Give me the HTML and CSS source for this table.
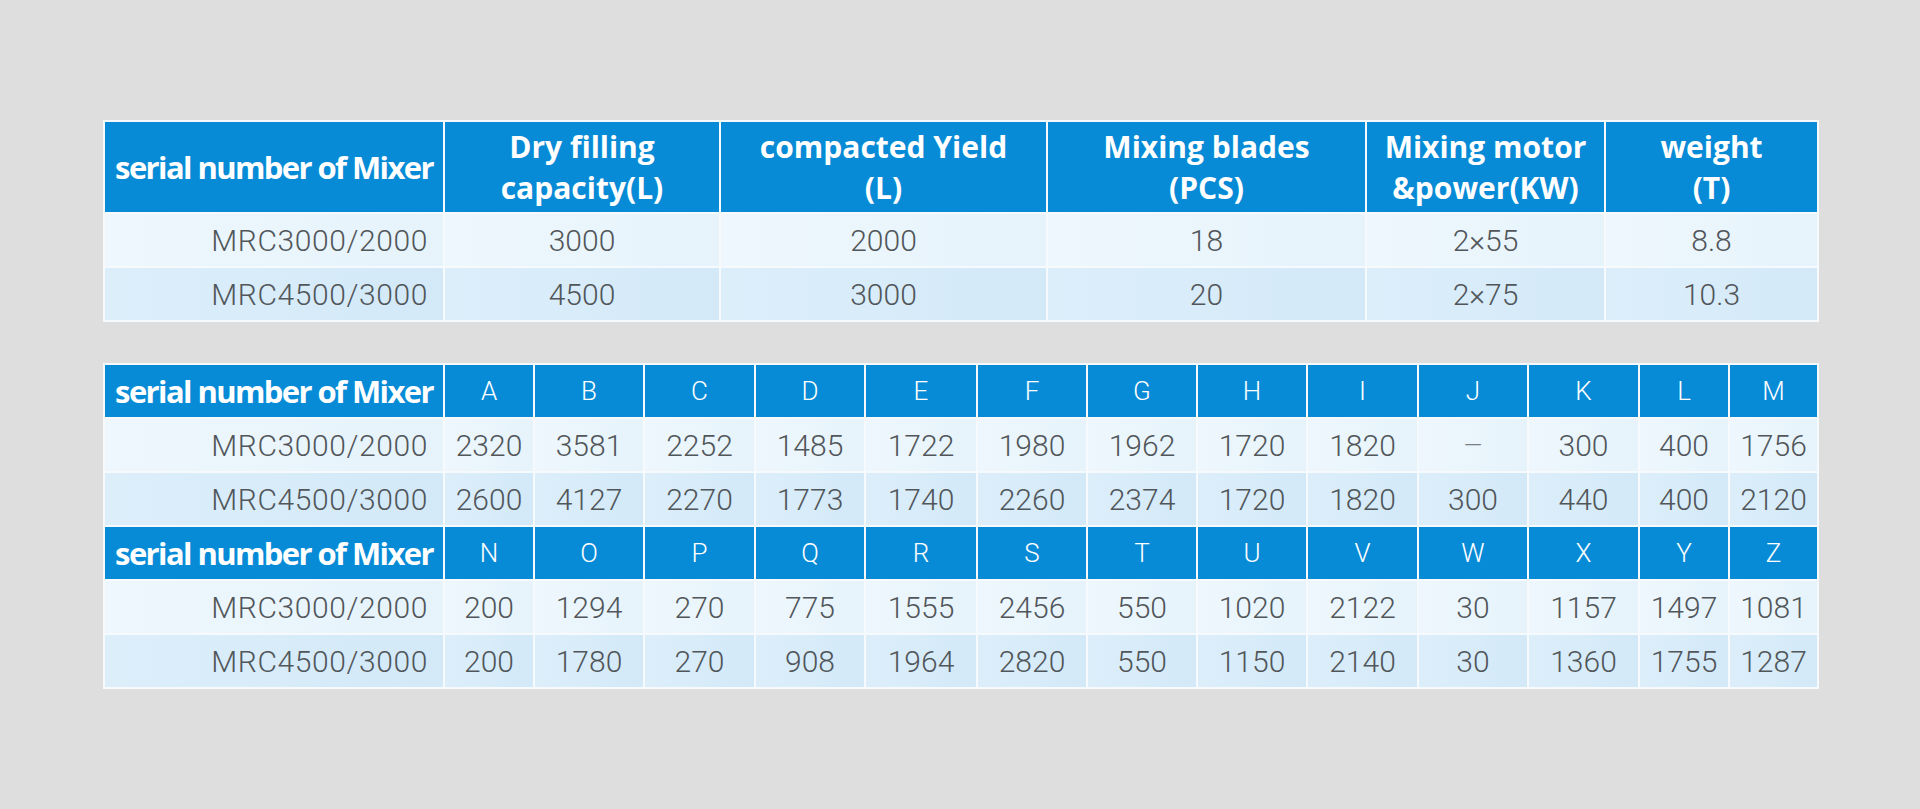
FILE: index.html
```html
<!DOCTYPE html>
<html lang="en">
<head>
<meta charset="utf-8">
<title>Mixer specifications</title>
<link rel="stylesheet" href="styles.css">
</head>
<body>
<main class="page">
  <table class="spec spec-main">
    <colgroup>
      <col class="c-serial"><col style="width:276px"><col style="width:327px"><col style="width:319px"><col style="width:239px"><col style="width:213px">
    </colgroup>
    <thead>
      <tr class="head-tall">
        <th class="serial-head"><span class="cond">serial number of Mixer</span></th>
        <th>Dry filling<br>capacity(L)</th>
        <th>compacted Yield<br>(L)</th>
        <th>Mixing blades<br>(PCS)</th>
        <th>Mixing motor<br>&amp;power(KW)</th>
        <th>weight<br>(T)</th>
      </tr>
    </thead>
    <tbody>
      <tr class="row-a"><td class="model">MRC3000/2000</td><td>3000</td><td>2000</td><td>18</td><td>2×55</td><td>8.8</td></tr>
      <tr class="row-b"><td class="model">MRC4500/3000</td><td>4500</td><td>3000</td><td>20</td><td>2×75</td><td>10.3</td></tr>
    </tbody>
  </table>

  <table class="spec spec-dims">
    <colgroup>
      <col class="c-serial">
      <col style="width:90px"><col style="width:110px"><col style="width:111px"><col style="width:110px"><col style="width:112px"><col style="width:110px"><col style="width:110px"><col style="width:110px"><col style="width:111px"><col style="width:110px"><col style="width:111px"><col style="width:90px"><col style="width:89px">
    </colgroup>
    <tbody>
      <tr class="head-row">
        <th class="serial-head"><span class="cond">serial number of Mixer</span></th>
        <th>A</th><th>B</th><th>C</th><th>D</th><th>E</th><th>F</th><th>G</th><th>H</th><th>I</th><th>J</th><th>K</th><th>L</th><th>M</th>
      </tr>
      <tr class="row-a">
        <td class="model">MRC3000/2000</td>
        <td>2320</td><td>3581</td><td>2252</td><td>1485</td><td>1722</td><td>1980</td><td>1962</td><td>1720</td><td>1820</td><td class="dash">—</td><td>300</td><td>400</td><td>1756</td>
      </tr>
      <tr class="row-b">
        <td class="model">MRC4500/3000</td>
        <td>2600</td><td>4127</td><td>2270</td><td>1773</td><td>1740</td><td>2260</td><td>2374</td><td>1720</td><td>1820</td><td>300</td><td>440</td><td>400</td><td>2120</td>
      </tr>
      <tr class="head-row">
        <th class="serial-head"><span class="cond">serial number of Mixer</span></th>
        <th>N</th><th>O</th><th>P</th><th>Q</th><th>R</th><th>S</th><th>T</th><th>U</th><th>V</th><th>W</th><th>X</th><th>Y</th><th>Z</th>
      </tr>
      <tr class="row-a">
        <td class="model">MRC3000/2000</td>
        <td>200</td><td>1294</td><td>270</td><td>775</td><td>1555</td><td>2456</td><td>550</td><td>1020</td><td>2122</td><td>30</td><td>1157</td><td>1497</td><td>1081</td>
      </tr>
      <tr class="row-b">
        <td class="model">MRC4500/3000</td>
        <td>200</td><td>1780</td><td>270</td><td>908</td><td>1964</td><td>2820</td><td>550</td><td>1150</td><td>2140</td><td>30</td><td>1360</td><td>1755</td><td>1287</td>
      </tr>
    </tbody>
  </table>
</main>
</body>
</html>
```

FILE: styles.css
```css
html, body {
  margin: 0;
  padding: 0;
}

body {
  background: #dedede;
  font-family: "Roboto", "Liberation Sans", sans-serif;
}

.page {
  padding: 120px 0 0 103px;
  display: flex;
  flex-direction: column;
  gap: 41px;
}

.spec {
  width: 1714px;
  table-layout: fixed;
  border-collapse: collapse;
  border: 2px solid #f6fafd;
}

.c-serial {
  width: 340px;
}

.spec th,
.spec td {
  border: 2px solid #f6fafd;
  padding: 0;
  text-align: center;
  vertical-align: middle;
  white-space: nowrap;
  overflow: visible;
}

.spec th {
  background: #088bd6;
  color: #ffffff;
}

.spec-main th {
  font-family: "Open Sans", "Liberation Sans", sans-serif;
  font-weight: 700;
  font-size: 30px;
  line-height: 41px;
  letter-spacing: 0;
}

.head-tall {
  height: 92px;
}

.head-row {
  height: 54px;
}

.spec-dims .head-row th {
  font-family: "Roboto", "Liberation Sans", sans-serif;
  font-weight: 300;
  font-size: 26px;
}

.spec th.serial-head {
  font-family: "Open Sans", "Liberation Sans", sans-serif;
  font-weight: 700;
  font-size: 31px;
  line-height: 43px;
  letter-spacing: -1.6px;
}

.row-a,
.row-b {
  height: 54px;
}

.spec td {
  font-family: "Roboto", "Liberation Sans", sans-serif;
  font-weight: 300;
  font-size: 30px;
  color: #51565a;
}

.row-a td {
  background: linear-gradient(90deg, #eef7fd, #e6f3fb);
}

.row-b td {
  background: linear-gradient(90deg, #dceefa, #d3e9f8);
}

.spec td.model {
  text-align: right;
  padding-right: 15px;
  letter-spacing: 0.6px;
}

.spec td.dash {
  color: #7a7f83;
  font-size: 24px;
}
```
